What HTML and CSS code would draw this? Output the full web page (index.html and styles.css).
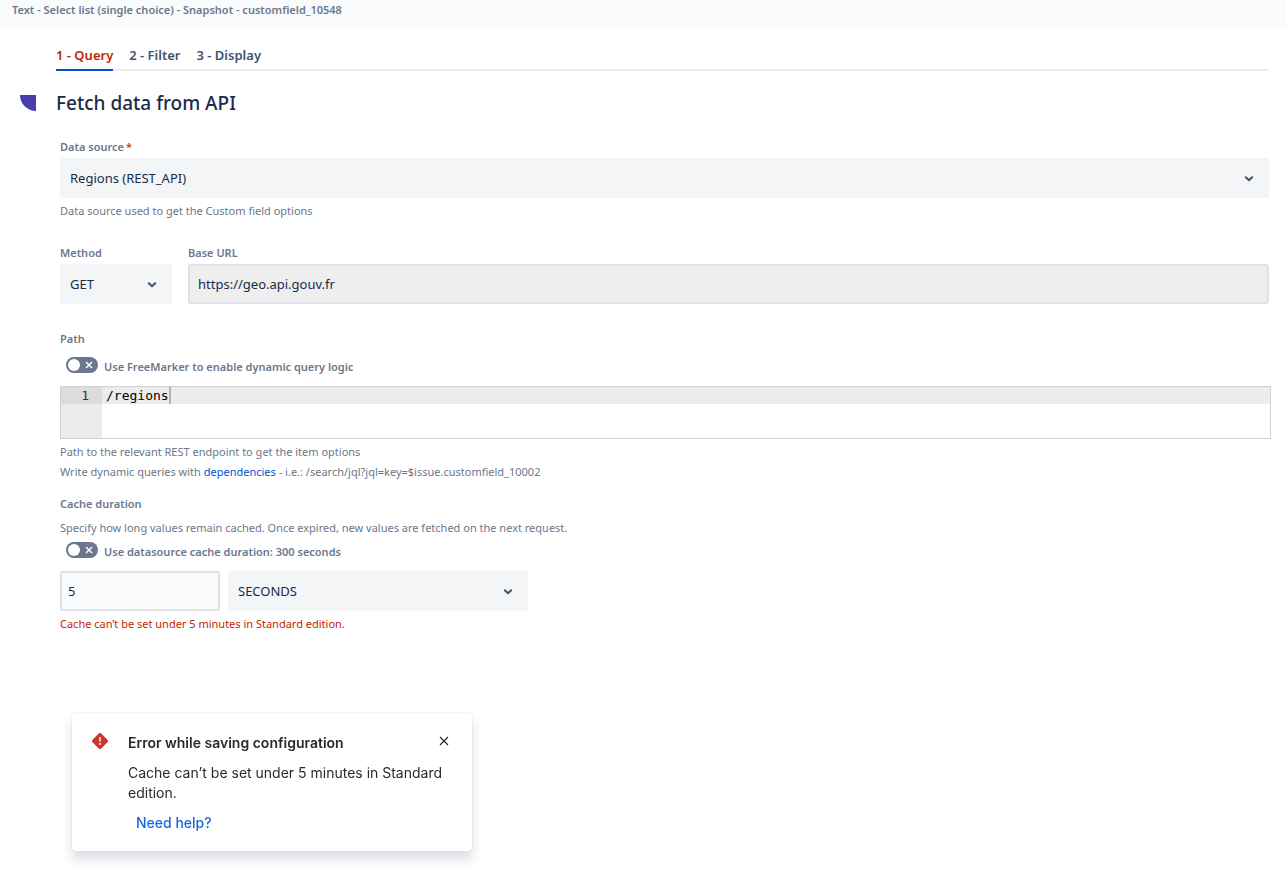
FILE: index.html
```html
<!DOCTYPE html>
<html lang="en">
<head>
    <meta charset="UTF-8">
    <meta name="viewport" content="width=device-width, initial-scale=1.0">
    <title>Custom field configuration</title>
    <link rel="stylesheet" href="styles.css">
</head>
<body>
    <header class="topbar">Text - Select list (single choice) - Snapshot - customfield_10548</header>

    <main class="page">
        <nav class="tabs">
            <a href="#query" class="tab active">1 - Query</a>
            <a href="#filter" class="tab">2 - Filter</a>
            <a href="#display" class="tab">3 - Display</a>
        </nav>

        <div class="title">
            <span class="title-mark"></span>
            <h1>Fetch data from API</h1>
        </div>

        <form class="form">
            <div class="form-group">
                <label class="label" for="dataSource">Data source<span class="required">*</span></label>
                <div class="select">
                    <select id="dataSource">
                        <option>Regions (REST_API)</option>
                    </select>
                    <svg class="chevron" viewBox="0 0 10 6"><path d="M1.8 1.2 5 4.2 8.2 1.2"/></svg>
                </div>
                <p class="hint">Data source used to get the Custom field options</p>
            </div>

            <div class="form-group form-row">
                <div class="method">
                    <label class="label" for="method">Method</label>
                    <div class="select">
                        <select id="method">
                            <option>GET</option>
                        </select>
                        <svg class="chevron" viewBox="0 0 10 6"><path d="M1.8 1.2 5 4.2 8.2 1.2"/></svg>
                    </div>
                </div>
                <div class="base-url">
                    <label class="label" for="baseUrl">Base URL</label>
                    <input class="input readonly" type="text" id="baseUrl" value="https://geo.api.gouv.fr" readonly>
                </div>
            </div>

            <div class="form-group path-group">
                <label class="label" for="path">Path</label>
                <div class="toggle-row">
                    <input type="checkbox" class="toggle-input" id="freemarker">
                    <label class="toggle-label" for="freemarker">
                        <svg class="toggle" viewBox="0 0 32 16"><rect width="32" height="16" rx="8"/><circle cx="8" cy="8" r="6"/><path d="M20 5l6 6M26 5l-6 6"/></svg>
                        <span>Use FreeMarker to enable dynamic query logic</span>
                    </label>
                </div>
                <div class="editor">
                    <div class="gutter"><span>1</span></div>
                    <div class="code">
                        <textarea id="path" rows="3" spellcheck="false">/regions</textarea>
                        <span class="cursor"></span>
                    </div>
                </div>
                <p class="hint">Path to the relevant REST endpoint to get the item options</p>
                <p class="hint next">Write dynamic queries with <a href="#dependencies">dependencies</a> - i.e.: /search/jql?jql=key=$issue.customfield_10002</p>
            </div>

            <div class="form-group cache-group">
                <label class="label" for="duration">Cache duration</label>
                <p class="hint">Specify how long values remain cached. Once expired, new values are fetched on the next request.</p>
                <div class="toggle-row">
                    <input type="checkbox" class="toggle-input" id="useCache">
                    <label class="toggle-label" for="useCache">
                        <svg class="toggle" viewBox="0 0 32 16"><rect width="32" height="16" rx="8"/><circle cx="8" cy="8" r="6"/><path d="M20 5l6 6M26 5l-6 6"/></svg>
                        <span>Use datasource cache duration: 300 seconds</span>
                    </label>
                </div>
                <div class="duration-row">
                    <input class="input duration" type="text" id="duration" value="5">
                    <div class="select unit">
                        <select aria-label="Duration unit">
                            <option>SECONDS</option>
                        </select>
                        <svg class="chevron" viewBox="0 0 10 6"><path d="M1.8 1.2 5 4.2 8.2 1.2"/></svg>
                    </div>
                </div>
                <p class="hint error">Cache can’t be set under 5 minutes in Standard edition.</p>
            </div>
        </form>
    </main>

    <div class="toast" role="alert">
        <svg class="toast-icon" viewBox="0 0 16 16"><path class="diamond" d="M6.7.6a1.8 1.8 0 0 1 2.6 0l6.1 6.1a1.8 1.8 0 0 1 0 2.6l-6.1 6.1a1.8 1.8 0 0 1-2.6 0L.6 9.3a1.8 1.8 0 0 1 0-2.6z"/><path class="bang" d="M8 4v4.5"/><circle cx="8" cy="11" r="1"/></svg>
        <div class="toast-body">
            <h2>Error while saving configuration</h2>
            <p>Cache can’t be set under 5 minutes in Standard edition.</p>
            <a href="#help">Need help?</a>
        </div>
        <button type="button" class="close" aria-label="Close">
            <svg viewBox="0 0 10 10"><path d="M1 1l8 8M9 1L1 9"/></svg>
        </button>
    </div>
</body>
</html>
```
FILE: styles.css
```css
* {
    box-sizing: border-box;
}
body {
    margin: 0;
    background: #fff;
    color: #172b4d;
    font-family: "Segoe UI", "Noto Sans", "Open Sans", sans-serif;
    font-size: 13px;
    line-height: 20px;
}
h1, h2, p {
    margin: 0;
}
a {
    color: #0052cc;
    text-decoration: none;
}
.topbar {
    height: 28px;
    padding: 0 12px;
    background: #fafbfc;
    color: #6b778c;
    font-size: 11px;
    font-weight: 600;
}
.page {
    padding: 17px 17px 0 20px;
}
.tabs {
    display: flex;
    gap: 16px;
    margin-left: 36px;
    border-bottom: 2px solid #ebecf0;
}
.tab {
    margin-bottom: -2px;
    padding-bottom: 4px;
    border-bottom: 2px solid transparent;
    color: #42526e;
    font-weight: 600;
}
.tab.active {
    border-color: #0052cc;
    color: #bf2600;
}
.title {
    display: flex;
    align-items: center;
    gap: 20px;
    margin: 18px 0 22px;
}
.title-mark {
    width: 16px;
    height: 16px;
    border-bottom-left-radius: 16px;
    background: #493eb0;
}
h1 {
    font-size: 19px;
    font-weight: 500;
    line-height: 28px;
}
.form {
    margin-left: 40px;
}
.form-group {
    margin-top: 24px;
}
.form-group:first-child {
    margin-top: 0;
}
.label {
    display: block;
    margin-bottom: 3px;
    color: #6b778c;
    font-size: 11px;
    font-weight: 600;
    line-height: 16px;
}
.required {
    padding-left: 2px;
    color: #de350b;
}
.select {
    position: relative;
}
.select select {
    display: block;
    width: 100%;
    height: 40px;
    padding: 0 32px 0 10px;
    border: 0;
    border-radius: 3px;
    appearance: none;
    background: #f4f5f7;
    color: #172b4d;
    font: inherit;
}
.chevron {
    position: absolute;
    top: 18px;
    right: 15px;
    width: 10px;
    height: 6px;
    fill: none;
    stroke: #42526e;
    stroke-width: 2;
    stroke-linecap: round;
    stroke-linejoin: round;
    pointer-events: none;
}
.input {
    display: block;
    width: 100%;
    height: 40px;
    padding: 0 8px;
    border: 2px solid #dfe1e6;
    border-radius: 3px;
    background: #fafbfc;
    color: #172b4d;
    font: inherit;
}
.input.readonly {
    background: #eee;
}
.hint {
    margin-top: 3px;
    color: #6b778c;
    font-size: 11px;
}
.hint.next {
    margin-top: 0;
}
.hint.error {
    color: #bf2600;
}
.form-row {
    display: flex;
    gap: 16px;
}
.method {
    width: 112px;
}
.base-url {
    flex: 1;
}
.path-group {
    margin-top: 27px;
}
.path-group > .label {
    margin-bottom: 10px;
}
.cache-group {
    margin-top: 14px;
}
.cache-group > .label {
    margin-bottom: 6px;
}
.toggle-row {
    margin-bottom: 9px;
    padding-left: 6px;
}
.cache-group .toggle-row {
    margin-top: 4px;
}
.toggle-input {
    position: absolute;
    opacity: 0;
}
.toggle-label {
    display: flex;
    align-items: flex-start;
    gap: 6px;
    color: #6b778c;
    font-size: 11px;
    font-weight: 600;
}
.toggle {
    width: 32px;
    height: 16px;
    fill: #6b778c;
}
.toggle circle {
    fill: #fff;
}
.toggle path {
    stroke: #fff;
    stroke-width: 1.5;
}
.editor {
    display: flex;
    margin-right: -2px;
    border: 1px solid #d1d1d1;
    font-family: Consolas, "DejaVu Sans Mono", monospace;
    line-height: 17px;
}
.gutter {
    width: 41px;
    background: #ebebeb;
    color: #333;
    text-align: right;
}
.gutter span {
    display: block;
    padding-right: 13px;
    background: #dcdcdc;
}
.code {
    position: relative;
    flex: 1;
}
.code textarea {
    display: block;
    width: 100%;
    height: 51px;
    padding: 0 4px;
    border: 0;
    outline: 0;
    resize: none;
    background: linear-gradient(#ececec 17px, #fff 17px);
    color: #000;
    font: inherit;
}
.cursor {
    position: absolute;
    top: 0;
    left: calc(8ch + 4px);
    width: 2px;
    height: 17px;
    background: #b3b3b3;
}
.duration-row {
    display: flex;
    gap: 8px;
}
.input.duration {
    width: 160px;
    padding: 0 6px;
}
.unit {
    width: 300px;
}
.toast {
    position: fixed;
    bottom: 24px;
    left: 72px;
    display: flex;
    align-items: flex-start;
    width: 400px;
    padding: 20px 20px 18px;
    border-radius: 3px;
    background: #fff;
    box-shadow: 0 8px 12px rgba(9, 30, 66, 0.15), 0 0 1px rgba(9, 30, 66, 0.31);
    color: #292a2e;
    font-family: Inter, sans-serif;
    font-size: 14px;
}
.toast-icon {
    width: 16px;
    height: 16px;
    margin-right: 20px;
}
.toast-icon .diamond {
    fill: #c9372c;
}
.toast-icon .bang {
    stroke: #fff;
    stroke-width: 1.5;
}
.toast-icon circle {
    fill: #fff;
}
.toast-body {
    flex: 1;
}
.toast h2 {
    font-size: 14px;
    font-weight: 600;
}
.toast p {
    margin: 10px 0;
    /* text runs under the close button */
    margin-right: -24px;
}
.toast a {
    margin-left: 8px;
    color: #1868db;
    font-weight: 500;
}
.close {
    display: flex;
    padding: 3px;
    border: 0;
    background: none;
    cursor: pointer;
}
.close svg {
    width: 10px;
    height: 10px;
    fill: none;
    stroke: #292a2e;
    stroke-width: 1.2;
}
```
